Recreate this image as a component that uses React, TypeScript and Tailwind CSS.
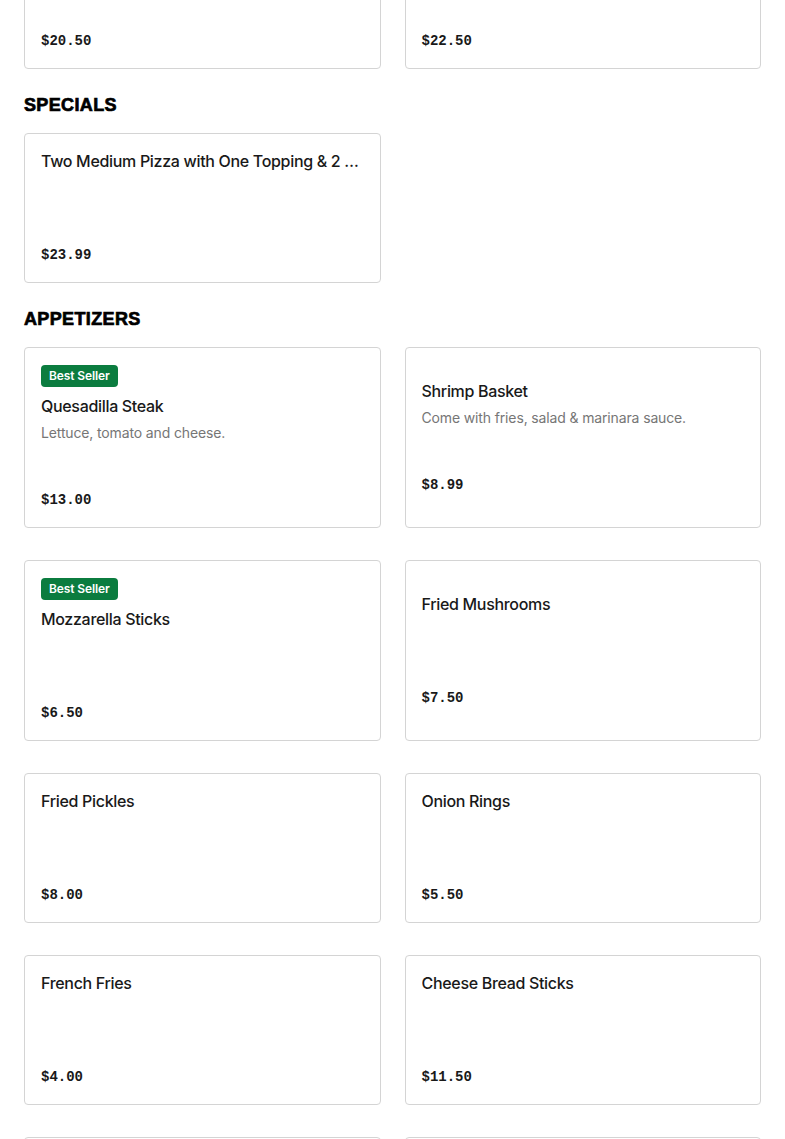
type Item = {
  name: string;
  price: string;
  description?: string;
  bestSeller?: boolean;
};

const pizzas: Item[] = [
  { name: 'Large Specialty Pizza', price: '$20.50' },
  { name: 'Extra Large Specialty Pizza', price: '$22.50' },
];

const specials: Item[] = [
  { name: 'Two Medium Pizza with One Topping & 2 Liter Soda', price: '$23.99' },
];

const appetizers: Item[] = [
  {
    name: 'Quesadilla Steak',
    description: 'Lettuce, tomato and cheese.',
    price: '$13.00',
    bestSeller: true,
  },
  { name: 'Shrimp Basket', description: 'Come with fries, salad & marinara sauce.', price: '$8.99' },
  { name: 'Mozzarella Sticks', price: '$6.50', bestSeller: true },
  { name: 'Fried Mushrooms', price: '$7.50' },
  { name: 'Fried Pickles', price: '$8.00' },
  { name: 'Onion Rings', price: '$5.50' },
  { name: 'French Fries', price: '$4.00' },
  { name: 'Cheese Bread Sticks', price: '$11.50' },
  { name: 'Buffalo Wings', price: '$12.00' },
  { name: 'Garlic Knots', price: '$5.00' },
];

function MenuCard({ item }: { item: Item }) {
  return (
    <div className="flex min-h-[150px] flex-col justify-center rounded border border-[#d4d4d4] bg-white px-4 pt-[17px] pb-[15px]">
      {item.bestSeller && (
        <div className="mb-[9px] self-start rounded bg-[#0b7c3f] px-2 text-[12px] leading-[22px] font-semibold tracking-[-0.01em] text-white">
          Best Seller
        </div>
      )}
      <div className="min-h-[48px]">
        <div className="-mt-px truncate text-[16px] leading-[22px] font-medium tracking-[-0.02em] text-[#191919]">
          {item.name}
        </div>
        {item.description && (
          <div className="mt-1.5 text-[14px] leading-5 tracking-[-0.01em] text-[#767676]">{item.description}</div>
        )}
      </div>
      <div className="mt-[44px] font-['Liberation_Mono',monospace] text-[14px] leading-6 font-bold text-[#191919]">
        {item.price}
      </div>
    </div>
  );
}

function Section({ title, items }: { title: string; items: Item[] }) {
  return (
    <section>
      <h2 className="pt-6 pb-4 font-['Liberation_Sans',sans-serif] text-[18px] leading-6 font-bold tracking-[0.02em] text-black [-webkit-text-stroke:0.7px_black]">
        {title}
      </h2>
      <div className="grid grid-cols-2 gap-x-6 gap-y-8">
        {items.map((item) => (
          <MenuCard key={item.name} item={item} />
        ))}
      </div>
    </section>
  );
}

export default function App() {
  return (
    <div className="min-h-screen overflow-hidden bg-white px-6 font-['Inter',sans-serif]">
      <div className="-mt-[81px] grid grid-cols-2 gap-x-6">
        {pizzas.map((item) => (
          <MenuCard key={item.name} item={item} />
        ))}
      </div>
      <Section title="SPECIALS" items={specials} />
      <Section title="APPETIZERS" items={appetizers} />
    </div>
  );
}
